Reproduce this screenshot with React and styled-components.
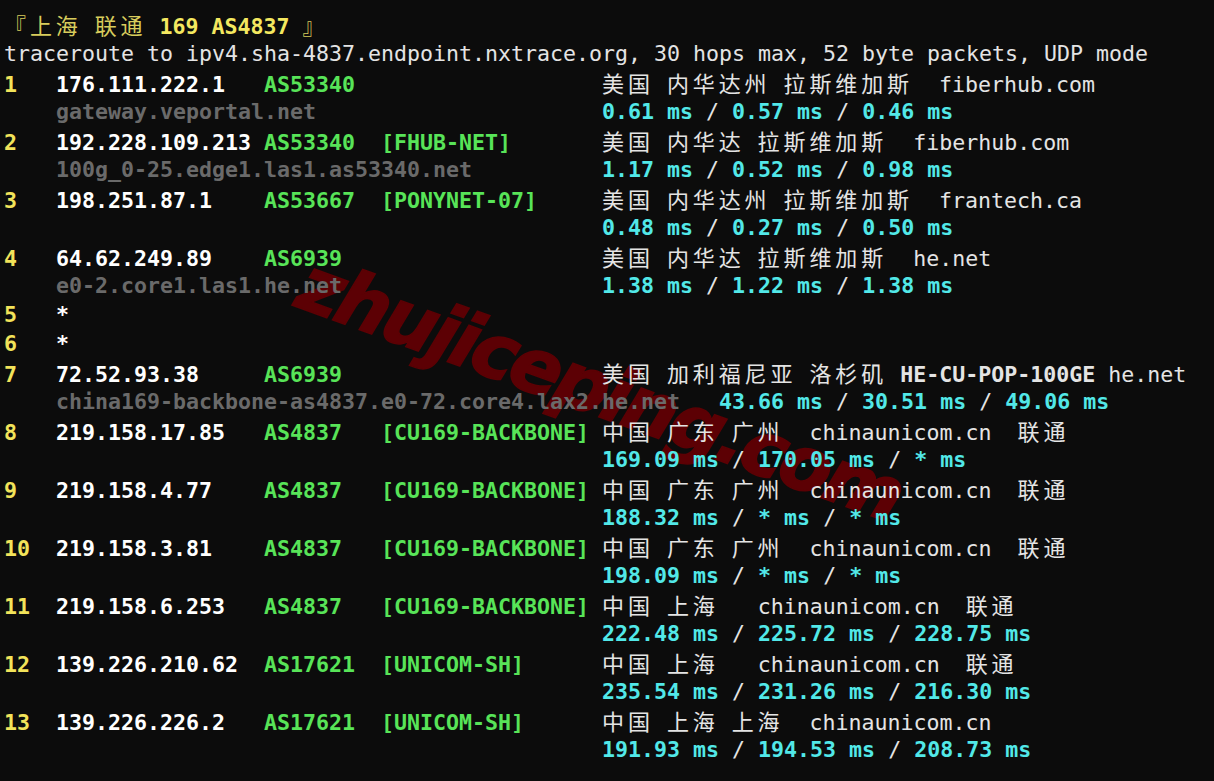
import React from 'react'
import styled, { createGlobalStyle } from 'styled-components'

const GlobalStyle = createGlobalStyle`
  html, body {
    margin: 0;
    padding: 0;
    background: #0c0c0c;
  }
`

const Terminal = styled.div`
  position: relative;
  width: 1214px;
  height: 781px;
  overflow: hidden;
  box-sizing: border-box;
  padding: 10px 0 0 4px;
  background: #0c0c0c;
  font-family: "DejaVu Sans Mono", "Liberation Mono", monospace;
  font-size: 21.6px;
  color: #e4e4e4;
`

const Output = styled.div`
  position: relative;
  z-index: 1;
  display: flex;
  flex-direction: column;
`

const Line = styled.div`
  height: 29px;
  line-height: 29px;
  white-space: pre;
`

const Cjk = styled.span`
  font-family: "Noto Sans CJK SC", sans-serif;
  font-size: 22px;
  letter-spacing: 3.9px;
  font-weight: 400;
`

const Title = styled.span`
  color: ${({ $bold }) => ($bold ? '#f4e860' : '#d8cc5c')};
  font-weight: ${({ $bold }) => ($bold ? 700 : 400)};
`

const HopNo = styled.span`
  color: #f2e35a;
  font-weight: 700;
`

const Ip = styled.span`
  color: #ffffff;
  font-weight: 700;
`

const Asn = styled.span`
  color: #58e458;
  font-weight: 700;
`

const Host = styled.span`
  color: #6a6a6a;
  font-weight: 700;
`

const Ms = styled.span`
  color: #52e8e8;
  font-weight: 700;
`

const Plain = styled.span`
  color: #e4e4e4;
  font-weight: ${({ $bold }) => ($bold ? 700 : 400)};
`

const Watermark = styled.div`
  position: absolute;
  left: 600px;
  top: 389px;
  z-index: 0;
  transform: translate(-50%, -50%) rotate(20deg);
  font-family: "DejaVu Sans", "Liberation Sans", sans-serif;
  font-size: 76px;
  font-weight: 700;
  font-style: italic;
  letter-spacing: -4px;
  color: #5c0004;
  -webkit-text-stroke: 1.5px #5c0004;
  white-space: nowrap;
`

const hops = [
  { n: '1', ip: '176.111.222.1', as: 'AS53340', net: '', geo: [['美国'], ' ', ['内华达州'], ' ', ['拉斯维加斯'], '  fiberhub.com'], host: 'gateway.veportal.net', ms: ['0.61', '0.57', '0.46'] },
  { n: '2', ip: '192.228.109.213', as: 'AS53340', net: '[FHUB-NET]', geo: [['美国'], ' ', ['内华达'], ' ', ['拉斯维加斯'], '  fiberhub.com'], host: '100g_0-25.edge1.las1.as53340.net', ms: ['1.17', '0.52', '0.98'] },
  { n: '3', ip: '198.251.87.1', as: 'AS53667', net: '[PONYNET-07]', geo: [['美国'], ' ', ['内华达州'], ' ', ['拉斯维加斯'], '  frantech.ca'], host: '', ms: ['0.48', '0.27', '0.50'] },
  { n: '4', ip: '64.62.249.89', as: 'AS6939', net: '', geo: [['美国'], ' ', ['内华达'], ' ', ['拉斯维加斯'], '  he.net'], host: 'e0-2.core1.las1.he.net', ms: ['1.38', '1.22', '1.38'] },
  { n: '5', star: true },
  { n: '6', star: true },
  { n: '7', ip: '72.52.93.38', as: 'AS6939', net: '', geo: [['美国'], ' ', ['加利福尼亚'], ' ', ['洛杉矶'], ' ', { b: 'HE-CU-POP-100GE' }, ' he.net'], host: 'china169-backbone-as4837.e0-72.core4.lax2.he.net', ms: ['43.66', '30.51', '49.06'] },
  { n: '8', ip: '219.158.17.85', as: 'AS4837', net: '[CU169-BACKBONE]', geo: [['中国'], ' ', ['广东'], ' ', ['广州'], '  chinaunicom.cn  ', ['联通']], host: '', ms: ['169.09', '170.05', '*'] },
  { n: '9', ip: '219.158.4.77', as: 'AS4837', net: '[CU169-BACKBONE]', geo: [['中国'], ' ', ['广东'], ' ', ['广州'], '  chinaunicom.cn  ', ['联通']], host: '', ms: ['188.32', '*', '*'] },
  { n: '10', ip: '219.158.3.81', as: 'AS4837', net: '[CU169-BACKBONE]', geo: [['中国'], ' ', ['广东'], ' ', ['广州'], '  chinaunicom.cn  ', ['联通']], host: '', ms: ['198.09', '*', '*'] },
  { n: '11', ip: '219.158.6.253', as: 'AS4837', net: '[CU169-BACKBONE]', geo: [['中国'], ' ', ['上海'], '   chinaunicom.cn  ', ['联通']], host: '', ms: ['222.48', '225.72', '228.75'] },
  { n: '12', ip: '139.226.210.62', as: 'AS17621', net: '[UNICOM-SH]', geo: [['中国'], ' ', ['上海'], '   chinaunicom.cn  ', ['联通']], host: '', ms: ['235.54', '231.26', '216.30'] },
  { n: '13', ip: '139.226.226.2', as: 'AS17621', net: '[UNICOM-SH]', geo: [['中国'], ' ', ['上海'], ' ', ['上海'], '  chinaunicom.cn'], host: '', ms: ['191.93', '194.53', '208.73'] },
]

// geo parts: ['汉字'] -> wide cjk, {b} -> bold plain, string -> plain
const Geo = ({ parts }) =>
  parts.map((p, i) => {
    if (Array.isArray(p)) return <Cjk key={i}>{p[0]}</Cjk>
    if (typeof p === 'object') return <Plain key={i} $bold>{p.b}</Plain>
    return <Plain key={i}>{p}</Plain>
  })

const Times = ({ values }) =>
  values.map((v, i) => (
    <React.Fragment key={i}>
      {i > 0 && <Plain> / </Plain>}
      <Ms>{v} ms</Ms>
    </React.Fragment>
  ))

const Hop = ({ hop }) => {
  if (hop.star) {
    return (
      <Line>
        <HopNo>{hop.n.padEnd(4)}</HopNo>
        <Ip>*</Ip>
      </Line>
    )
  }
  const gap = hop.host.length < 42 ? 42 - hop.host.length : 3
  return (
    <>
      <Line>
        <HopNo>{hop.n.padEnd(4)}</HopNo>
        <Ip>{hop.ip.padEnd(16)}</Ip>
        <Asn>{hop.as.padEnd(9)}</Asn>
        <Asn>{hop.net.padEnd(17)}</Asn>
        <Geo parts={hop.geo} />
      </Line>
      <Line>
        {'    '}
        <Host>{hop.host}</Host>
        {' '.repeat(gap)}
        <Times values={hop.ms} />
      </Line>
    </>
  )
}

export default function App() {
  return (
    <Terminal>
      <GlobalStyle />
      <Watermark>zhujiceping.com</Watermark>
      <Output>
        <Line>
          <Title><Cjk>『上海</Cjk> <Cjk>联通</Cjk> </Title>
          <Title $bold>169 AS4837</Title>
          <Title> <Cjk>』</Cjk></Title>
        </Line>
        <Line>
          <Plain>traceroute to ipv4.sha-4837.endpoint.nxtrace.org, 30 hops max, 52 byte packets, UDP mode</Plain>
        </Line>
        {hops.map((h) => (
          <Hop key={h.n} hop={h} />
        ))}
      </Output>
    </Terminal>
  )
}
